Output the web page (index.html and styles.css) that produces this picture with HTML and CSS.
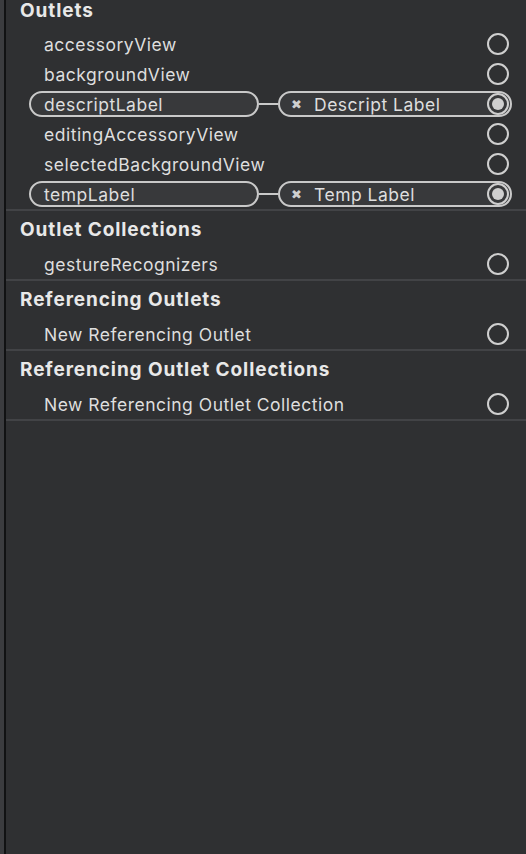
FILE: index.html
```html
<!DOCTYPE html>
<html>
<head>
<meta charset="utf-8">
<link rel="stylesheet" href="styles.css">
</head>
<body>
<div class="frame">
  <div class="edge"></div>
  <div class="edge-dark"></div>
  <div class="panel">
    <section class="section first">
      <div class="header">Outlets</div>
      <div class="row"><span class="name">accessoryView</span><span class="dot"></span></div>
      <div class="row"><span class="name">backgroundView</span><span class="dot"></span></div>
      <div class="row linked">
        <span class="pill left"><span class="name">descriptLabel</span></span>
        <span class="wire"></span>
        <span class="pill right"><span class="x">✖</span><span class="target">Descript Label</span><span class="dot on"></span></span>
      </div>
      <div class="row"><span class="name">editingAccessoryView</span><span class="dot"></span></div>
      <div class="row"><span class="name">selectedBackgroundView</span><span class="dot"></span></div>
      <div class="row linked">
        <span class="pill left"><span class="name">tempLabel</span></span>
        <span class="wire"></span>
        <span class="pill right"><span class="x">✖</span><span class="target">Temp Label</span><span class="dot on"></span></span>
      </div>
    </section>
    <section class="section">
      <div class="header">Outlet Collections</div>
      <div class="row"><span class="name">gestureRecognizers</span><span class="dot"></span></div>
    </section>
    <section class="section">
      <div class="header">Referencing Outlets</div>
      <div class="row"><span class="name">New Referencing Outlet</span><span class="dot"></span></div>
    </section>
    <section class="section">
      <div class="header">Referencing Outlet Collections</div>
      <div class="row"><span class="name">New Referencing Outlet Collection</span><span class="dot"></span></div>
    </section>
  </div>
</div>
</body>
</html>
```
FILE: styles.css
```css
html, body {
  margin: 0;
  padding: 0;
  height: 100%;
  background: #2f3032;
}
body {
  font-family: Inter, "Noto Sans", "Liberation Sans", sans-serif;
  color: #dedede;
  overflow: hidden;
}
.frame {
  display: flex;
  height: 854px;
}
.edge {
  width: 4px;
  background: #3b3c3f;
}
.edge-dark {
  width: 2px;
  background: #111213;
}
.panel {
  flex: 1;
  display: flex;
  flex-direction: column;
}
.section {
  border-bottom: 2px solid #424346;
}
.section.first {
  margin-top: -9px;
}
.header {
  height: 38px;
  line-height: 38px;
  padding-left: 14px;
  font-size: 19px;
  font-weight: 700;
  letter-spacing: 0.9px;
  color: #e8e8e8;
}
.section.first .header {
  line-height: 40px;
}
.row {
  height: 30px;
  display: flex;
  align-items: center;
  padding-left: 38px;
  padding-right: 17px;
  font-size: 17.5px;
  letter-spacing: 0.5px;
}
.name {
  flex: 1;
  white-space: nowrap;
}
.dot {
  width: 18px;
  height: 18px;
  border: 2px solid #cfcfcf;
  border-radius: 50%;
  flex: none;
  box-sizing: content-box;
  display: flex;
  align-items: center;
  justify-content: center;
}
.dot.on::after {
  content: "";
  width: 12px;
  height: 12px;
  border-radius: 50%;
  background: #cfcfcf;
}
.row.linked {
  padding-left: 23px;
  padding-right: 14px;
}
.pill {
  height: 22px;
  border: 2px solid #c9c9c9;
  border-radius: 13px;
  background: #38393b;
  display: flex;
  align-items: center;
}
.pill.left {
  width: 213px;
  padding-left: 13px;
}
.wire {
  width: 19px;
  height: 2px;
  background: #c9c9c9;
}
.pill.right {
  flex: 1;
  padding-left: 11px;
  padding-right: 1px;
}
.x {
  font-size: 13px;
  color: #cfcfcf;
  width: 23px;
  letter-spacing: 0;
}
.target {
  flex: 1;
  white-space: nowrap;
}
```
